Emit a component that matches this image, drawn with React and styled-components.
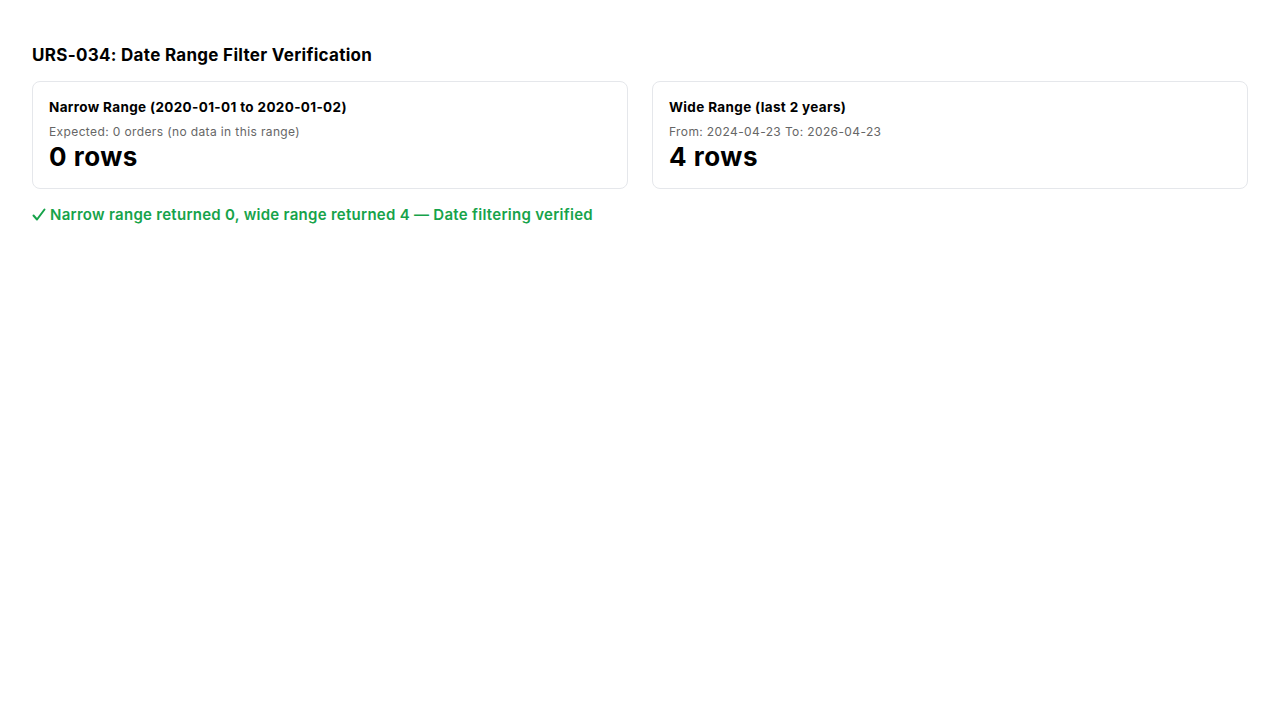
import React from 'react';
import styled, { createGlobalStyle } from 'styled-components';

const GlobalStyle = createGlobalStyle`
  body {
    margin: 0;
    background: #fff;
    font-family: Inter, "Noto Sans", sans-serif;
    color: #000;
  }
`;

const Page = styled.div`
  padding: 43px 32px;
`;

const Title = styled.h2`
  margin: 0 0 14px;
  font-size: 17px;
  line-height: 24px;
  font-weight: 700;
  letter-spacing: 0.3px;
`;

const Grid = styled.div`
  display: grid;
  grid-template-columns: 1fr 1fr;
  gap: 24px;
`;

const Card = styled.div`
  border: 1px solid #e5e7eb;
  border-radius: 8px;
  padding: 15px 16px 15px;
`;

const CardTitle = styled.div`
  font-size: 13.5px;
  line-height: 20px;
  font-weight: 700;
  letter-spacing: 0.35px;
`;

const Note = styled.div`
  margin-top: 6px;
  font-size: 12px;
  line-height: 18px;
  color: #666;
  letter-spacing: 0.38px;
`;

const Count = styled.div`
  font-size: 26px;
  line-height: 32px;
  font-weight: 700;
  letter-spacing: 0.5px;
`;

const Result = styled.div`
  display: flex;
  align-items: center;
  gap: 4px;
  margin-top: 16px;
  font-size: 15px;
  line-height: 20px;
  font-weight: 600;
  letter-spacing: 0.28px;
  color: ${p => (p.ok ? '#16a34a' : '#dc2626')};
`;

const Check = styled.svg`
  width: 14px;
  height: 14px;
  flex: none;
`;

const ranges = [
  { title: 'Narrow Range (2020-01-01 to 2020-01-02)', note: 'Expected: 0 orders (no data in this range)', rows: 0 },
  { title: 'Wide Range (last 2 years)', note: 'From: 2024-04-23 To: 2026-04-23', rows: 4 },
];

export default function App() {
  let [narrow, wide] = ranges;
  let ok = narrow.rows === 0 && wide.rows > 0;

  return (
    <Page>
      <GlobalStyle />
      <Title>URS-034: Date Range Filter Verification</Title>
      <Grid>
        {ranges.map(r => (
          <Card key={r.title}>
            <CardTitle>{r.title}</CardTitle>
            <Note>{r.note}</Note>
            <Count>{r.rows} rows</Count>
          </Card>
        ))}
      </Grid>
      <Result ok={ok}>
        <Check viewBox="0 0 14 14">
          <path d="M1.5 7.5 L5 11.5 L12.5 1.5" fill="none" stroke="currentColor" strokeWidth="2" strokeLinecap="round" strokeLinejoin="round" />
        </Check>
        <span>Narrow range returned {narrow.rows}, wide range returned {wide.rows} — Date filtering verified</span>
      </Result>
    </Page>
  );
}
